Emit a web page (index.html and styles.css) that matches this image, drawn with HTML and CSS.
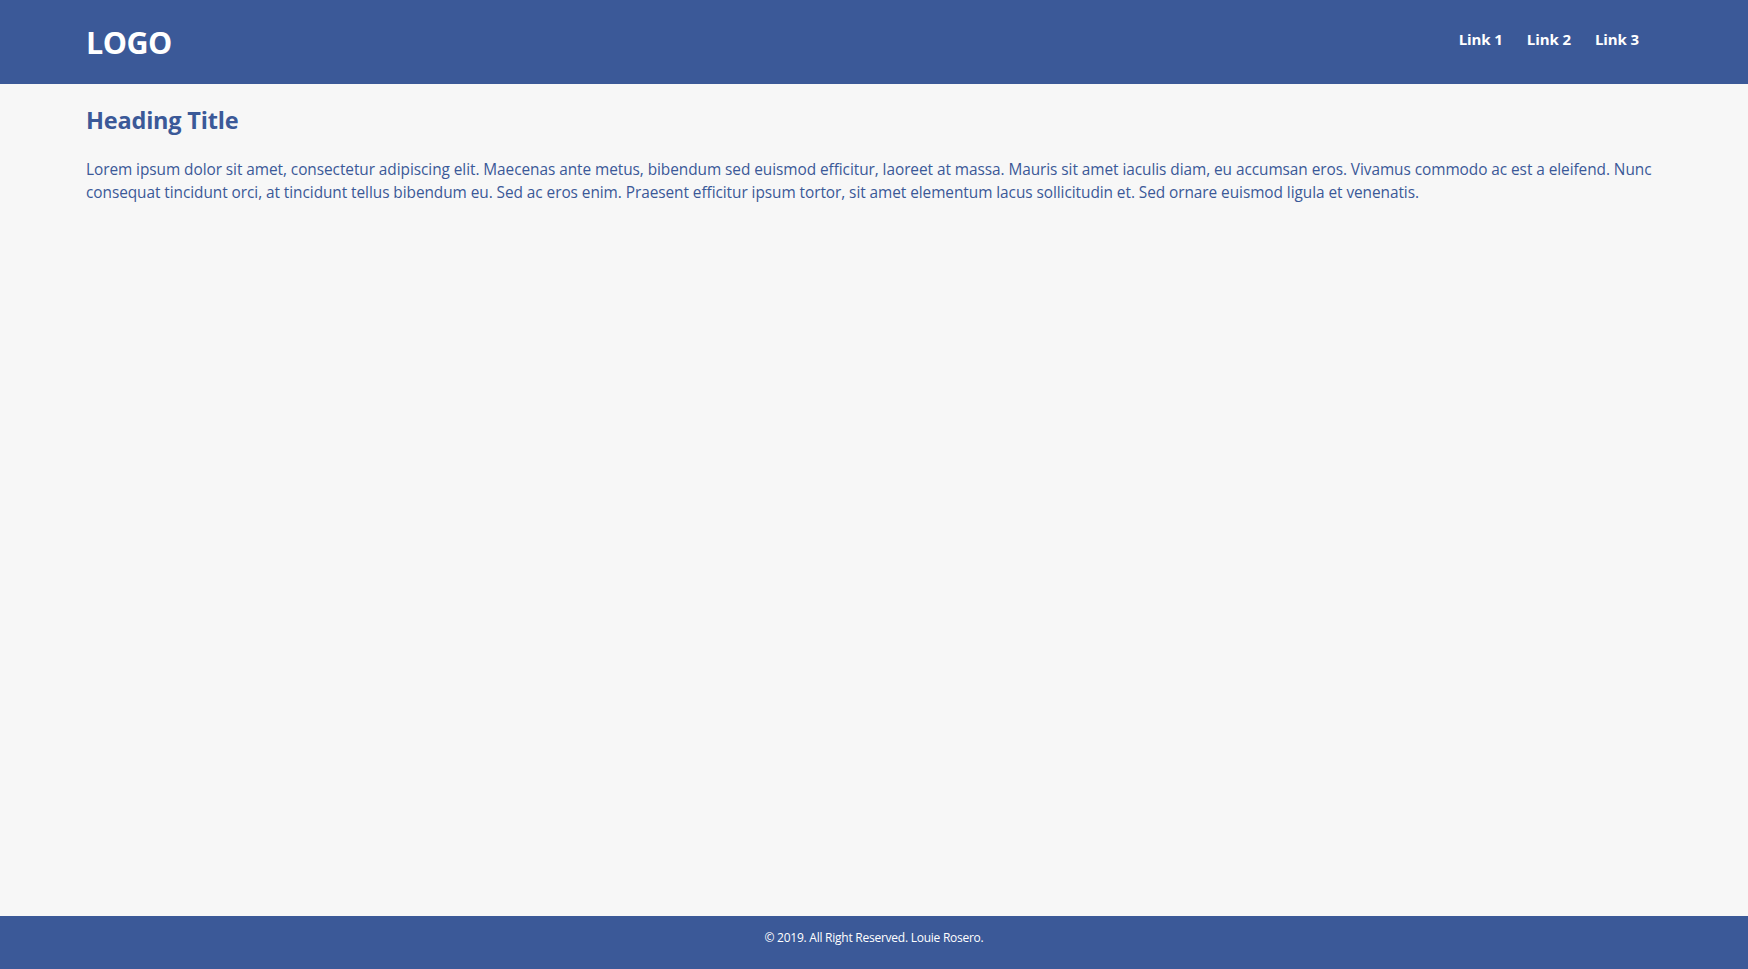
FILE: index.html
```html
<!DOCTYPE html>
<html lang="en">
<head>
<meta charset="utf-8">
<title>Page</title>
<link rel="stylesheet" href="styles.css">
</head>
<body>
<header class="site-header">
  <div class="container header-inner">
    <div class="logo">LOGO</div>
    <nav class="nav">
      <a class="nav-link" href="#">Link 1</a>
      <a class="nav-link" href="#">Link 2</a>
      <a class="nav-link" href="#">Link 3</a>
    </nav>
  </div>
</header>
<main class="content">
  <div class="container">
    <h1 class="title">Heading Title</h1>
    <p class="text">Lorem ipsum dolor sit amet, consectetur adipiscing elit. Maecenas ante metus, bibendum sed euismod efficitur, laoreet at massa. Mauris sit amet iaculis diam, eu accumsan eros. Vivamus commodo ac est a eleifend. Nunc consequat tincidunt orci, at tincidunt tellus bibendum eu. Sed ac eros enim. Praesent efficitur ipsum tortor, sit amet elementum lacus sollicitudin et. Sed ornare euismod ligula et venenatis.</p>
  </div>
</main>
<footer class="site-footer">
  <p class="copy">© 2019. All Right Reserved. Louie Rosero.</p>
</footer>
</body>
</html>
```
FILE: styles.css
```css
html, body {
  margin: 0;
  padding: 0;
}
body {
  background: #f7f7f7;
  font-family: "Open Sans", "Noto Sans", sans-serif;
  color: #3b5998;
  min-height: 100vh;
  display: flex;
  flex-direction: column;
}
.container {
  width: calc(100% - 172px);
  margin: 0 auto;
}
.site-header {
  background: #3b5998;
  height: 84px;
  display: flex;
  align-items: center;
}
.header-inner {
  display: flex;
  justify-content: space-between;
  align-items: center;
}
.logo {
  color: #fff;
  font-size: 30.5px;
  font-weight: 700;
  letter-spacing: -0.5px;
  line-height: 1;
}
.nav {
  display: flex;
  padding-bottom: 6px;
  margin-right: 11px;
}
.nav-link {
  color: #fff;
  text-decoration: none;
  font-weight: 700;
  font-size: 15px;
  padding: 0 12px;
  letter-spacing: -0.1px;
}
.content {
  flex: 1;
}
.title {
  font-size: 23.5px;
  font-weight: 700;
  margin: 21px 0 0;
  line-height: 1.3;
  letter-spacing: -0.2px;
}
.text {
  font-size: 15.4px;
  line-height: 23.5px;
  margin: 22px 0 0;
  letter-spacing: -0.06px;
}
.site-footer {
  background: #3b5998;
  height: 53px;
  display: flex;
  align-items: center;
  justify-content: center;
}
.copy {
  margin: 0;
  color: #fff;
  font-size: 12px;
  padding-bottom: 10px;
  letter-spacing: -0.25px;
}
```
